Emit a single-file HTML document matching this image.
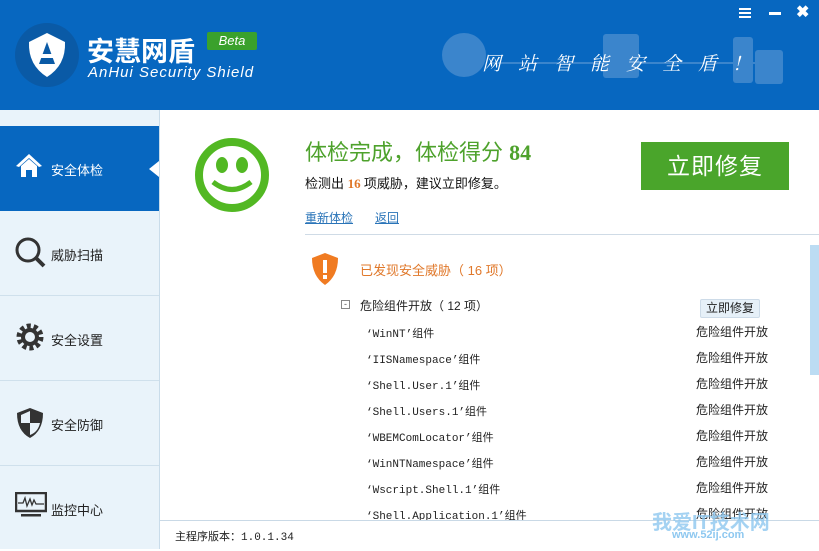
<!DOCTYPE html>
<html><head><meta charset="utf-8"><style>
*{margin:0;padding:0;box-sizing:border-box}
body{width:819px;height:549px;overflow:hidden;background:#fff;font-family:"Liberation Sans","Noto Sans CJK SC",sans-serif;position:relative;font-size:12px;color:#222}
.hdr{position:absolute;left:0;top:0;width:819px;height:110px;background:#0767c0}
.abs{position:absolute}
.side{position:absolute;left:0;top:110px;width:160px;height:439px;background:#e9f3fa;border-right:1px solid #c9dcea}
.item{position:absolute;left:0;width:159px;height:85px;border-bottom:1px solid #cfe0ec;font-size:13px;color:#222}
.item span{position:absolute;left:51px;top:34px}
.item svg{position:absolute;left:15px;top:26px}
.row{position:absolute;left:366px;font-size:11px;font-family:"Liberation Mono","Noto Sans CJK SC",monospace;color:#222}
.r2{position:absolute;left:696px;font-size:12px;color:#222}
</style></head><body>
<div class="hdr">
 <div class="abs" style="left:15px;top:23px;width:64px;height:64px;border-radius:50%;background:#0a5aa6"></div>
 <svg class="abs" style="left:22px;top:30px" width="50" height="50" viewBox="0 0 50 50"><path d="M25 3 L43 12 Q44 35 25 47 Q6 35 7 12 Z" fill="#fff"/><path d="M25 12 L17 34 H33 Z" fill="#0a5aa6"/><rect x="18" y="24" width="14" height="4" fill="#fff"/></svg>
 <div class="abs" style="left:87px;top:30px;font-size:27px;font-weight:bold;color:#fff;letter-spacing:0px">安慧网盾</div>
 <div class="abs" style="left:207px;top:32px;width:50px;height:18px;background:#3aa12c;border-radius:2px;color:#fff;font-style:italic;font-size:13px;text-align:center;line-height:18px">Beta</div>
 <div class="abs" style="left:88px;top:64px;font-size:15px;font-style:italic;color:#fff;letter-spacing:1px">AnHui Security Shield</div>
 <div class="abs" style="left:442px;top:33px;width:44px;height:44px;border-radius:50%;background:#3b85cc"></div>
 <div class="abs" style="left:603px;top:34px;width:36px;height:44px;background:#3b85cc;border-radius:3px"></div>
 <div class="abs" style="left:733px;top:37px;width:20px;height:46px;background:#3b85cc;border-radius:3px"></div>
 <div class="abs" style="left:755px;top:50px;width:28px;height:34px;background:#3b85cc;border-radius:3px"></div>
 <div class="abs" style="left:490px;top:62px;width:280px;height:2px;background:#3b85cc"></div>
 <div class="abs" style="left:482px;top:49px;font-size:19px;font-style:italic;color:#fff;letter-spacing:17px;font-family:'Noto Serif CJK SC',serif">网站智能安全盾!</div>
 <div class="abs" style="left:739px;top:8px;width:12px;height:2px;background:#fff;box-shadow:0 4px 0 #fff,0 8px 0 #fff"></div>
 <div class="abs" style="left:769px;top:12px;width:12px;height:3px;background:#fff"></div>
 <div class="abs" style="left:796px;top:2px;font-size:16px;font-weight:bold;color:#fff">✖</div>
</div>
<div class="side">
 <div class="item" style="top:16px;background:#0767c0;color:#fff;border:none"><svg width="28" height="26" viewBox="0 0 28 26"><path d="M14 2 L1 14 L4 15 L14 6 L24 15 L27 14 Z" fill="#fff"/><path d="M6 14 L14 7 L22 14 V25 H17 V18 H11 V25 H6 Z" fill="#fff"/></svg><span>安全体检</span>
  <div class="abs" style="left:149px;top:35px;border:8px solid transparent;border-right:10px solid #fff;border-left:0"></div></div>
 <div class="item" style="top:101px"><svg width="32" height="32" viewBox="0 0 32 32"><circle cx="13" cy="13" r="11" fill="none" stroke="#333" stroke-width="3"/><path d="M21 21 L29 29" stroke="#333" stroke-width="4"/></svg><span>威胁扫描</span></div>
 <div class="item" style="top:186px"><svg width="30" height="30" viewBox="0 0 30 30"><circle cx="15" cy="15" r="11" fill="none" stroke="#333" stroke-width="5" stroke-dasharray="4 2.9"/><circle cx="15" cy="15" r="9" fill="#333"/><circle cx="15" cy="15" r="5" fill="#e9f3fa"/></svg><span>安全设置</span></div>
 <div class="item" style="top:271px"><svg width="30" height="32" viewBox="0 0 30 32"><path d="M15 1 L28 6 Q28 24 15 31 Q2 24 2 6 Z" fill="#333"/><path d="M15 4 L6 8 V16 H15 Z M15 16 H25 Q23 25 15 28 Z" fill="#e9f3fa"/></svg><span>安全防御</span></div>
 <div class="item" style="top:356px;border:none"><svg width="32" height="26" viewBox="0 0 32 26"><rect x="1" y="1" width="30" height="18" fill="none" stroke="#333" stroke-width="2.5"/><path d="M3 11 H8 L10 6 L12 14 L15 7 L17 13 L19 8 L21 12 H29" fill="none" stroke="#333" stroke-width="1.3"/><rect x="6" y="22" width="20" height="2.5" fill="#333"/></svg><span>监控中心</span></div>
</div>
<svg class="abs" style="left:194px;top:137px" width="76" height="76" viewBox="0 0 76 76"><circle cx="38" cy="38" r="33" fill="none" stroke="#52b823" stroke-width="8"/><ellipse cx="28" cy="28" rx="6" ry="8" fill="#52b823"/><ellipse cx="48" cy="28" rx="6" ry="8" fill="#52b823"/><path d="M19 45 Q38 60 57 45" fill="none" stroke="#52b823" stroke-width="5"/></svg>
<div class="abs" style="left:305px;top:135px;font-size:22px;color:#4ea22c">体检完成，体检得分 <b style="font-family:'Liberation Serif',serif">84</b></div>
<div class="abs" style="left:305px;top:173px;font-size:13px;color:#111">检测出 <b style="color:#e0782a;font-family:'Liberation Serif',serif"> 16 </b> 项威胁，建议立即修复。</div>
<div class="abs" style="left:305px;top:209px;font-size:12px;color:#2a74b8;text-decoration:underline">重新体检</div>
<div class="abs" style="left:375px;top:209px;font-size:12px;color:#2a74b8;text-decoration:underline">返回</div>
<div class="abs" style="left:641px;top:142px;width:148px;height:48px;background:#4aa52b;color:#fff;font-size:23px;text-align:center;line-height:48px;letter-spacing:1px">立即修复</div>
<div class="abs" style="left:305px;top:234px;width:514px;height:1px;background:#cfdbe6"></div>
<svg class="abs" style="left:310px;top:252px" width="30" height="34" viewBox="0 0 30 34"><path d="M15 1 L28 6 Q28 24 15 33 Q2 24 2 6 Z" fill="#f07b22"/><rect x="13" y="8" width="4" height="13" fill="#fff"/><rect x="13" y="23" width="4" height="4" fill="#fff"/></svg>
<div class="abs" style="left:360px;top:260px;font-size:13px;color:#e0782a">已发现安全威胁（ 16 项）</div>
<div class="abs" style="left:341px;top:300px;width:9px;height:9px;border:1px solid #888;font-size:9px;line-height:6px;text-align:center;color:#555">-</div>
<div class="abs" style="left:360px;top:297px;font-size:12px">危险组件开放（ 12 项）</div>
<div class="abs" style="left:700px;top:299px;width:60px;height:19px;background:#e6f0f8;border:1px solid #cddbe8;border-radius:2px;font-size:12px;text-align:center;line-height:17px">立即修复</div>
<div class="abs" style="left:810px;top:245px;width:9px;height:130px;background:#bcdcf3"></div>
<div class="row" style="top:325px">‘WinNT’组件</div><div class="r2" style="top:323px">危险组件开放</div>
<div class="row" style="top:351px">‘IISNamespace’组件</div><div class="r2" style="top:349px">危险组件开放</div>
<div class="row" style="top:377px">‘Shell.User.1’组件</div><div class="r2" style="top:375px">危险组件开放</div>
<div class="row" style="top:403px">‘Shell.Users.1’组件</div><div class="r2" style="top:401px">危险组件开放</div>
<div class="row" style="top:429px">‘WBEMComLocator’组件</div><div class="r2" style="top:427px">危险组件开放</div>
<div class="row" style="top:455px">‘WinNTNamespace’组件</div><div class="r2" style="top:453px">危险组件开放</div>
<div class="row" style="top:481px">‘Wscript.Shell.1’组件</div><div class="r2" style="top:479px">危险组件开放</div>
<div class="row" style="top:507px">‘Shell.Application.1’组件</div><div class="r2" style="top:505px">危险组件开放</div>
<div class="abs" style="left:160px;top:520px;width:659px;height:29px;background:#fff;border-top:1px solid #c9d9e6"></div>
<div class="abs" style="left:175px;top:528px;font-size:11px;font-family:'Liberation Mono','Noto Sans CJK SC',monospace">主程序版本：1.0.1.34</div>
<div class="abs" style="left:652px;top:506px;font-size:20px;font-weight:bold;color:#8ec8f0;opacity:.8">我爱IT技术网</div>
<div class="abs" style="left:672px;top:529px;font-size:11px;font-weight:bold;color:#8ec8f0">www.52ij.com</div>
</body></html>
